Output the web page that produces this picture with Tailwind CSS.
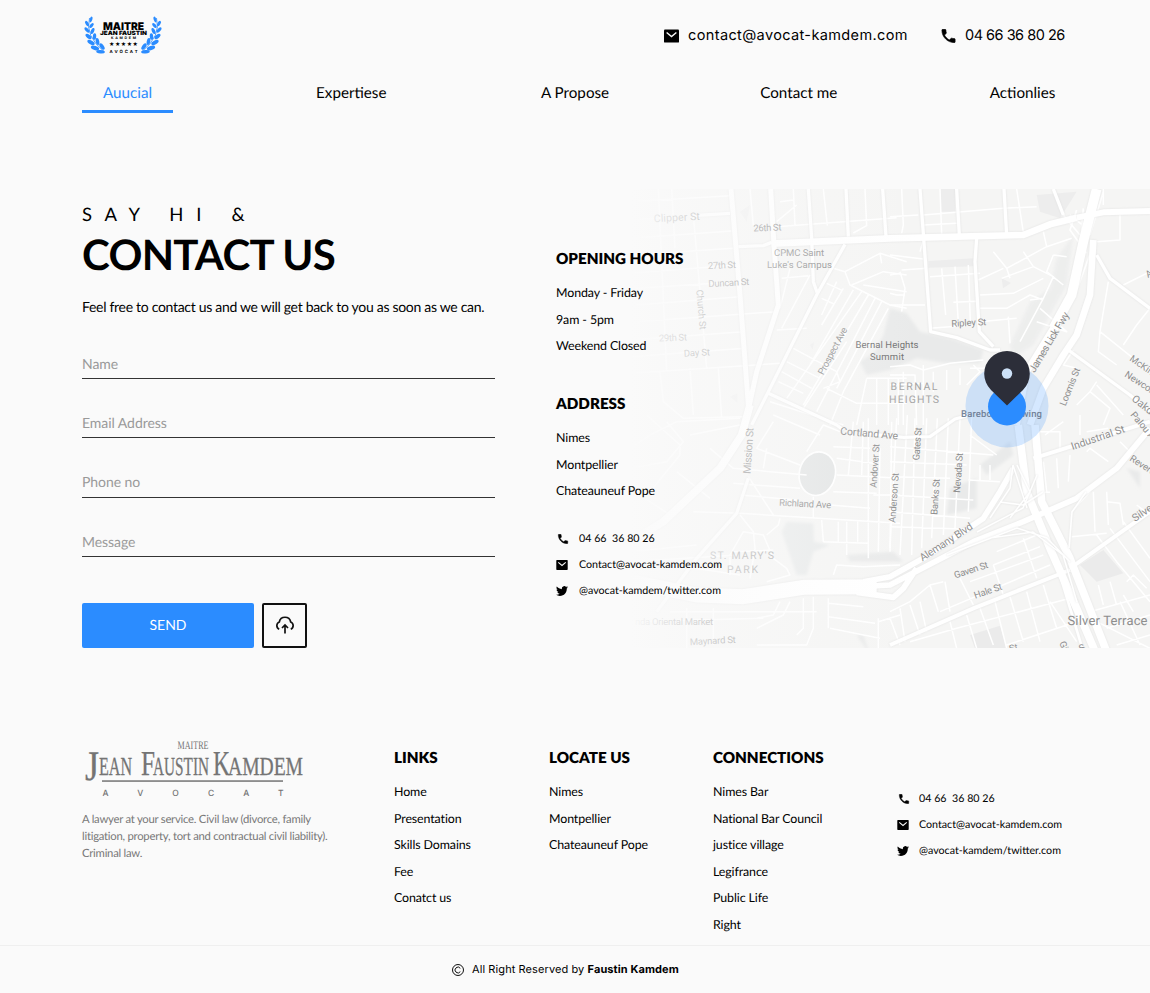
<!DOCTYPE html>
<html lang="en">
<head>
<meta charset="utf-8">
<title>Contact – Maitre Jean Faustin Kamdem</title>
<script src="https://cdn.jsdelivr.net/npm/@tailwindcss/browser@4"></script>
</head>
<body class="bg-[#fafafa] font-['Lato',sans-serif] text-black [text-rendering:geometricPrecision]">
<svg class="hidden">
  <symbol id="mail" viewBox="0 0 16 14"><rect width="16" height="14" rx="1"/><path d="M2.800 3.200 8 7.600l5.200-4.400" fill="none" stroke="#fafafa" stroke-width="1.500"/></symbol>
  <symbol id="phone" viewBox="2.500 2.500 19 19"><path d="M6.620 10.790c1.440 2.830 3.760 5.140 6.590 6.590l2.200-2.200c.27-.27.67-.36 1.020-.24 1.120.37 2.330.57 3.570.57.55 0 1 .45 1 1V20c0 .55-.45 1-1 1-9.390 0-17-7.610-17-17 0-.55.45-1 1-1h3.500c.55 0 1 .45 1 1 0 1.250.2 2.450.57 3.570.11.35.03.74-.25 1.020l-2.200 2.200z" stroke="#000" stroke-width=".8"/></symbol>
  <symbol id="bird" viewBox="0 2 24 20"><path d="M23.950 4.570a10 10 0 0 1-2.820.77 4.960 4.960 0 0 0 2.160-2.720c-.95.55-2 .95-3.130 1.180a4.920 4.920 0 0 0-8.380 4.480C7.690 8.090 4.070 6.130 1.640 3.160a4.820 4.820 0 0 0-.67 2.480c0 1.710.87 3.210 2.190 4.100a4.900 4.900 0 0 1-2.230-.62v.06a4.920 4.920 0 0 0 3.950 4.830 5 5 0 0 1-2.210.08 4.940 4.940 0 0 0 4.600 3.420A9.870 9.870 0 0 1 0 19.540a13.990 13.990 0 0 0 7.550 2.210c9.050 0 14-7.500 14-13.980 0-.21 0-.42-.02-.63a9.940 9.940 0 0 0 2.460-2.550z"/></symbol>
</svg>

<header class="h-[189px] pl-[82px] pr-[82px] flex flex-col">
  <div class="flex h-[71px] items-center justify-between pr-[3px]">
    <svg class="h-[44px] w-[84px]" viewBox="81 13 84 44">
      <g id="laurel" fill="#2b8cff">
        <path d="M88.500 17q-5 18 15 34" fill="none" stroke="#2b8cff" stroke-width=".8"/>
        <ellipse cx="90" cy="18.500" rx="1.300" ry="3" transform="rotate(20 90 18.500)"/>
        <ellipse cx="86" cy="22.500" rx="1.500" ry="3" transform="rotate(-30 86 22.500)"/>
        <ellipse cx="90.500" cy="24.500" rx="1.500" ry="3" transform="rotate(40 90.500 24.500)"/>
        <ellipse cx="86" cy="29" rx="1.600" ry="3.300" transform="rotate(-40 86 29)"/>
        <ellipse cx="91.500" cy="30" rx="1.600" ry="3.200" transform="rotate(25 91.500 30)"/>
        <ellipse cx="87.500" cy="35.500" rx="1.800" ry="3.600" transform="rotate(-50 87.500 35.500)"/>
        <ellipse cx="93.500" cy="35.500" rx="1.700" ry="3.300" transform="rotate(5 93.500 35.500)"/>
        <ellipse cx="90" cy="41.500" rx="1.900" ry="4" transform="rotate(-62 90 41.500)"/>
        <ellipse cx="96.500" cy="40.500" rx="1.800" ry="3.500" transform="rotate(-10 96.500 40.500)"/>
        <ellipse cx="94" cy="47" rx="2" ry="4.300" transform="rotate(-72 94 47)"/>
        <ellipse cx="101" cy="45.500" rx="1.900" ry="3.700" transform="rotate(-35 101 45.500)"/>
        <ellipse cx="99.500" cy="50.800" rx="1.700" ry="4.300" transform="rotate(-85 99.500 50.800)"/>
      </g>
      <use href="#laurel" transform="translate(244 0) scale(-1 1)"/>
      <g font-family="Inter, sans-serif" font-weight="900">
        <text x="102" y="28.800" font-size="10.500" textLength="41" lengthAdjust="spacingAndGlyphs">MAITRE</text>
        <text x="99" y="34" font-size="5.800" textLength="47" lengthAdjust="spacingAndGlyphs">JEAN FAUSTIN</text>
        <text x="110" y="38.300" font-size="3.500" font-weight="700" textLength="25">KAMDEM</text>
        <text x="108" y="45.200" font-size="6" textLength="29" font-family="DejaVu Sans">★★★★★</text>
        <text x="108.500" y="52.300" font-size="4.300" font-weight="700" textLength="28">AVOCAT</text>
      </g>
    </svg>
    <div class="flex items-center font-['Inter',sans-serif] text-[14.5px]">
      <svg class="mr-[9px] h-[14px] w-[15px]"><use href="#mail"/></svg>
      <span class="w-[220px] whitespace-nowrap tracking-[0.38px]">contact@avocat-kamdem.com</span>
      <svg class="ml-[33px] mr-[9px] h-[14px] w-[15px]"><use href="#phone"/></svg>
      <span class="w-[100px] whitespace-nowrap tracking-[-0.5px]">04 66 36 80 26</span>
    </div>
  </div>
  <nav class="flex justify-between text-center text-[15.2px] leading-[20px]">
    <a class="h-[42px] w-[91px] border-b-3 border-[#2b8cff] pt-[12px] text-[#2b8cff]">Auucial</a>
    <a class="w-[91px] pt-[12px]">Expertiese</a>
    <a class="w-[91px] pt-[12px]">A Propose</a>
    <a class="w-[91px] pt-[12px]">Contact me</a>
    <a class="w-[91px] pt-[12px]">Actionlies</a>
  </nav>
</header>

<main class="relative flex h-[459px] pl-[82px]">
  <svg class="absolute right-0 top-0 h-[459px] w-[520px]" viewBox="630 189 520 459" fill="none" stroke-linejoin="round">
    <defs>
      <linearGradient id="fade"><stop offset="0" stop-color="#fafafa"/><stop offset=".12" stop-color="#fafafa" stop-opacity=".78"/><stop offset=".35" stop-color="#fafafa" stop-opacity=".52"/><stop offset=".65" stop-color="#fafafa" stop-opacity=".22"/><stop offset="1" stop-color="#fafafa" stop-opacity="0"/></linearGradient>
      <filter id="soft"><feGaussianBlur stdDeviation="5"/></filter>
      <filter id="edge" filterUnits="userSpaceOnUse" x="630" y="189" width="520" height="459"><feDropShadow dx="0" dy="0" stdDeviation="1" flood-color="#dcdcdc" flood-opacity=".8"/></filter>
    </defs>
    <rect x="630" y="189" width="520" height="459" fill="#f5f5f4"/>
    <!-- parks and blocks -->
    <g fill="#e9eaea">
      <g transform="translate(630 185) scale(.33333)"><path filter="url(#soft)" d="M780 370 830 385 870 440 960 460 1060 495 1050 535 950 535 860 520 780 555 710 570 690 530 735 500 760 450z"/><path fill="#efefef" d="M330 80 360 60 350 110zM540 480l12-10-4 24zM300 635l22-10v28z"/></g>
      <g transform="translate(890 185) scale(.33333)"><path fill="#ededed" d="M150 12h45v68h-42zM115 228l137-8v24l-137 4zM440 30l120-10-50 80-60-20zM335 280l28 14-24 16z"/><path filter="url(#soft)" d="M500 220 550 150 530 300 430 480 370 520 360 480 420 350 480 310z" opacity=".6"/></g>
      <g transform="translate(630 415) scale(.33333)"><ellipse cx="562" cy="176" rx="54" ry="66" transform="rotate(14 562 176)" fill="#e3e5e5" stroke="#fff" stroke-width="5"/><path fill="#e8eaea" filter="url(#soft)" d="M470 320 550 325 552 380 600 390 550 410 530 480 500 480 455 350z"/><path filter="url(#soft)" d="M650 420 790 410 820 440 660 440zM680 660l20 0 20 60z"/></g>
      <g transform="translate(890 415) scale(.33333)"><path fill="#ebebeb" d="M570 450 640 405 700 475 620 500zM240 660 330 632 355 715 260 715z"/><path filter="url(#soft)" d="M360 80 370 120 290 180 270 150zM180 220 260 190 260 280 170 300zM710 160 750 170 750 220z"/></g>
    </g>
    <!-- minor streets -->
    <g stroke="#fff" stroke-width="4.500">
      <g transform="translate(630 185) scale(.33333)">
        <path d="M0 50 300 32M0 160 305 138M0 105 80 100M0 210 310 190M0 265 320 240M20 310 325 290M20 360 330 335M20 410 440 380M0 465 340 440M0 515 345 490M0 565 450 535M125 10 135 190M190 90 230 550M85 12 110 560M180 550l10 140M265 550l10 150M90 560l10 90 60 50 180-5M360 12l10 110M490 12l5 110M580 12l12 110M705 12l5 110-40 22M440 125 800 98M450 50l40-5M500 60l-60 50M480 250l-30 120M540 270 455 430M440 435 530 430M455 280l80-8M590 295l48 22M575 340 612 357M620 290l-45 100M640 310l-65 110M670 315 540 540M695 320 470 640M715 330 520 660M735 340 560 680M755 350 620 610M775 370 640 620 600 720M490 490 620 560 630 590 580 610M470 530 570 580M455 560 545 610M445 590 520 625M590 610 680 655H830M650 470l-130 200M610 250 645 260 660 300 780 360 830 370M645 260 750 205 830 230M665 300 760 260 830 270M700 300 830 320M750 205l5 30M420 650 640 720M710 580 680 720M710 580H830M740 580v140M775 580v140M805 580v140"/>
      </g>
      <g transform="translate(890 185) scale(.33333)">
        <path d="M0 95 85 90M100 90 340 70 440 65M100 120 200 115M35 12 40 120 35 145M150 12l5 135M380 12l20 130M0 210 100 222M100 165 90 200M35 255 110 250M30 260 45 310 35 380M0 325 20 330 45 330M0 360 105 360M0 270 30 265M155 250l12 140M195 245l10 170M235 240l6 170M120 275l150-10M190 352l70-3M310 200l40 50 10 30M350 250 470 185 545 160M470 185 460 140M340 250 265 285M335 280 430 245 490 275 460 340M430 245 400 200M270 330 370 325 460 280M270 370 350 370 420 330 460 345M490 210 530 215M490 210 470 260 520 300M355 395l5 80M270 410 380 400M120 430l130-10M420 345 460 340 390 470M450 370 530 440 440 410M640 12 640 60M690 90v75l-70 5M780 370 740 420 700 480M780 260 700 300M655 290 630 440 625 500 680 540M630 440 780 560M550 495 520 540 560 550M620 590 600 620 660 670 640 720M600 620 560 660M620 600 700 690M0 545 60 540 100 555 180 535 280 525M0 570H60 75l5 150M40 560v160M100 540v180M130 560v60M170 555v60M210 550v50M0 600l100-5M230 600l40-40-20-20M240 550h60"/>
        <path d="M520 90 570 150M540 90 590 130M560 75l-20 60 50 70M580 70 575 140M620 12 590 120M640 20 600 150M610 180 555 330" stroke-width="5"/>
      </g>
      <g transform="translate(630 415) scale(.33333)">
        <path d="M0 100 60 60 140 20 330 10M0 160 110 140 160 80 110 20M50 0 150 90 150 120 60 230M0 220 120 300M140 170 240 250M180 60 330 30M240 100 310 160 530 180M310 205 510 220M330 240 500 255M190 290 330 295 810 325M355 185 430 300M430 20 380 100 510 150M430 0 570 60M410 100 400 160M530 110 580 30 630 50M610 95l110 5M620 130l110 15M620 180l110 5M610 230l130 5M600 270l120 10M550 245v65M575 315 580 380M580 380 715 385M625 320v60M650 320 650 420M683 320v60M670 20 655 180M715 10V430M750 100 745 410M785 20 780 410M700 20 695 180M730 185 810 190M730 240h80M300 480 300 420 340 350 400 360 430 430 470 460 480 480 410 500M330 300 370 350 375 400 360 490M450 310 445 330 410 360M310 410 430 405M170 580V700M250 580V690M120 590 560 590M550 545V640L530 690 380 690M520 550V640L500 660M480 560 460 600 380 640M450 560 430 600 380 610M595 550V640M595 565 700 575M595 605l140 20M745 610v90M745 620 810 600M780 610 810 690M600 640l150 30M0 620 400 610M0 440 320 420M130 450 330 480M610 480 620 450 700 455 810 450M0 410 200 390"/>
      </g>
      <g transform="translate(890 415) scale(.33333)">
        <path d="M20 10 0 400M52 0 30 420M75 10 65 420M110 10 95 400M142 10 125 370M175 10 160 360M210 10 195 340M245 0 235 290M0 95 310 120M0 140 230 150M0 185 180 190M235 195 330 200M0 240 250 255M0 290 240 310M0 335 220 342M270 150v45M300 150v45M320 120 240 60M450 50h60v60M465 60 520 20M570 60V0M590 50 655 40M460 140 470 230M500 130 505 220M540 120 535 200M590 110 600 100 655 140M690 80l40 40M480 232h-30M580 230 600 230 545 290 538 400M610 230 615 350M650 230 655 330M650 260 690 265 700 330M545 365 650 355M740 270 780 300M620 360 680 440 780 560M660 340 780 500M700 320 780 430M625 510 640 570M660 500 680 570M700 540 730 590M710 500 730 480 770 520M600 590 780 540M650 640 780 600M680 690 780 660M690 560 750 690M620 620 780 700M0 590 60 560 120 510 160 500M120 510 145 590M165 500 180 590M210 490 250 570M310 450 340 540M400 370 440 490M320 410 440 360M310 450 450 395M240 500 460 420M150 590 480 450M60 570 90 660M30 580 45 680M90 560 110 650M180 620 200 700M230 600 260 700M270 580 310 690M315 560 350 700M360 545 400 680M410 530 450 680M460 510 500 640M60 680 200 640 540 550M350 690 560 620M480 560 560 680"/>
      </g>
    </g>
    <!-- main roads, with a faint edge -->
    <g stroke="#fff" filter="url(#edge)"><g transform="translate(630 185) scale(.33333)">
        <path stroke-width="15" d="M303 12 330 330 355 660M422 12 432 180 445 360 380 560 345 720"/>
        <path stroke-width="10" d="M325 185 400 182 425 172M190 92 300 85M535 12 545 160 550 290 562 325M648 12 655 155M645 178 560 330 490 470 415 620 365 720M415 625 620 720 640 735M758 12 768 155"/>
        <path stroke-width="20" d="M425 176 780 160 1180 150 1260 118 1340 98"/>
        <path stroke-width="10" d="M870 12 902 440 980 458 1080 495 1110 495M980 12 988 150M1122 12 1130 150M1040 160 1035 230 1048 440 1090 485M1270 12 1300 90M1400 210 1440 280 1560 370M1315 495 1500 630 1560 680"/>
        <path stroke-width="18" d="M1340 98 1420 82 1560 78"/>
        <path stroke-width="29" d="M1400 12 1360 170 1325 330 1270 430"/>
        <path stroke-width="20" d="M1390 165 1380 330 1340 450 1300 510 1240 610 1200 720M1270 430 1190 560 1160 720"/>
        <path stroke-width="23" d="M360 660 335 750 270 850 100 1010 0 1070"/>
        <path stroke-width="10" d="M355 880 320 985 200 1120 80 1280M700 745 820 757 900 755 975 702 1020 690"/>
        <path stroke-width="45" d="M0 1190 200 1230 340 1235 520 1207 740 1205"/>
        <path stroke-width="17" d="M700 1190 780 1175 880 1120 1060 1000 1110 920 1150 850M640 1208 780 1200 1030 1070 1180 1010 1340 940 1460 850 1560 730M680 1222 790 1237 820 1210 860 1150"/>
        <path stroke-width="23" d="M1165 720 1190 920 1260 1090 1340 1270 1400 1410M1215 720 1235 950 1320 1120 1430 1400"/>
        <path stroke-width="12" d="M1210 820 1560 710M1320 1150 1560 980M780 1380 1030 1270 1320 1155"/>
        <path stroke-width="8" d="M1290 1170 1360 1400"/>
    </g></g>
    <g filter="url(#edge)" stroke="#fff" stroke-width="1.500">
      <path d="M1013 465 1010 488 990 518M1017 465 1030 492 1010 518M1000 502 1023 505 1043 492M1013 465 1027 508M977 532 1023 508 1037 475M947 555 1017 528 1047 538 1070 562M990 538 1033 532 1063 555 1077 602M1086 492 1072 512 1069 548"/>
    </g>
    <!-- street and district names -->
    <g fill="#8e8e8e" font-family="Roboto, sans-serif" font-size="9.500" text-anchor="middle">
      <text transform="translate(677 221) rotate(-3)" font-size="10.500" textLength="46">Clipper St</text>
      <text transform="translate(767.500 231) rotate(-2)" textLength="28">26th St</text>
      <text x="799" y="256" textLength="50">CPMC Saint</text><text x="799.500" y="267.500" textLength="65">Luke's Campus</text>
      <text transform="translate(722 268.500) rotate(-2)" textLength="28">27th St</text>
      <text transform="translate(729 286) rotate(-3)" textLength="41">Duncan St</text>
      <text transform="translate(698 310) rotate(85)" textLength="40">Church St</text>
      <text transform="translate(673 341) rotate(-2)" textLength="28">29th St</text>
      <text transform="translate(697 356) rotate(-3)" textLength="26">Day St</text>
      <text transform="translate(835.500 352.500) rotate(-62)" textLength="52">Prospect Ave</text>
      <g fill="#707070"><text x="887" y="348" textLength="63">Bernal Heights</text><text x="887" y="360" textLength="34">Summit</text></g>
      <g font-size="10.500" fill="#a4a4a4"><text x="914" y="390" textLength="47">BERNAL</text><text x="914" y="403" textLength="50">HEIGHTS</text><text x="742" y="559" textLength="64">ST. MARY'S</text><text x="742.500" y="572.500" textLength="31">PARK</text></g>
      <text transform="translate(969 326) rotate(-3)" textLength="35">Ripley St</text>
      <text transform="translate(1052 344) rotate(-59)" font-size="10.500" textLength="68">James Lick Fwy</text>
      <text transform="translate(1073 388) rotate(-68)" textLength="40">Loomis St</text>
      <text transform="translate(869 437) rotate(5)" font-size="10.500" textLength="58">Cortland Ave</text>
      <text transform="translate(752 451) rotate(-86)" font-size="10.500" textLength="46">Mission St</text>
      <text transform="translate(805 507) rotate(3)" textLength="52">Richland Ave</text>
      <text transform="translate(878 466) rotate(-86)" textLength="44">Andover St</text>
      <text transform="translate(897 498) rotate(-86)" textLength="50">Anderson St</text>
      <text transform="translate(920.500 444) rotate(-86)" textLength="33">Gates St</text>
      <text transform="translate(938.500 497) rotate(-86)" textLength="36">Banks St</text>
      <text transform="translate(961.500 473) rotate(-86)" textLength="40">Nevada St</text>
      <text transform="translate(948 545) rotate(-33)" font-size="10.500" textLength="61">Alemany Blvd</text>
      <text transform="translate(1099 441) rotate(-19)" font-size="10.500" textLength="56">Industrial St</text>
      <text transform="translate(972 573) rotate(-18)" textLength="35">Gaven St</text>
      <text transform="translate(989 594) rotate(-19)" textLength="29">Hale St</text>
      <text x="1107.500" y="625" font-size="13" textLength="80">Silver Terrace</text>
      <text transform="translate(713 644) rotate(-3)" textLength="46">Maynard St</text>
      <text x="674" y="624.500" textLength="78">nda Oriental Market</text>
      <g text-anchor="start">
        <text transform="translate(1129 360) rotate(35)">McKinnon Ave</text><text transform="translate(1124 376) rotate(33)">Newcomb Ave</text>
        <text transform="translate(1131 400) rotate(38)" font-size="10.500">Oakdale Ave</text><text transform="translate(1130 415) rotate(50)">Palou Ave</text>
        <text transform="translate(1129 460) rotate(33)">Revere Ave</text><text transform="translate(1135 522) rotate(-34)" font-size="10.500">Silver Ave</text>
        <text transform="translate(1148 278) rotate(-32)">Ave</text><text transform="translate(1010 652) rotate(-14)">St</text><text transform="translate(1059 643) rotate(65)">Gi</text><text transform="translate(1081 652) rotate(-28)">S</text>
      </g>
    </g>
    <rect x="630" y="189" width="290" height="459" fill="url(#fade)"/>
    <!-- location pin -->
    <circle cx="1007" cy="406" r="41.500" fill="#2b8cff" opacity=".2"/>
    <text x="1001.500" y="416.500" fill="#73839a" font-family="Roboto" font-weight="500" font-size="9.500" text-anchor="middle" textLength="81">Barebones Sewing</text>
    <circle cx="1007" cy="406.500" r="19" fill="#2b8cff"/>
    <path d="M1007 405.500 991 390A22.800 22.800 0 1 1 1023 390z" fill="#2c2e39"/>
    <circle cx="1007" cy="373.500" r="5.200" fill="#cde1f8"/>
  </svg>

  <section class="w-[474px] pt-[12px]">
    <p class="h-[26px] text-[18.500px] leading-[26px] tracking-[12.700px] whitespace-nowrap">SAY HI &amp;</p>
    <h1 class="mt-[1px] h-[52px] text-[42px] font-bold leading-[52px] tracking-[-0.700px] whitespace-nowrap">CONTACT US</h1>
    <p class="mt-[17px] h-[20px] text-[14px] leading-[20px] tracking-[-0.300px] whitespace-nowrap">Feel free to contact us and we will get back to you as soon as we can.</p>
    <form class="mt-[33px] w-[413px] text-[14px] leading-[20px] tracking-[-0.050px] text-[#999]">
      <div class="h-[29px] border-b border-[#333] pt-[3.500px]">Name</div>
      <div class="mt-[30.400px] h-[29px] border-b border-[#333] pt-[3.500px]">Email Address</div>
      <div class="mt-[30.400px] h-[29px] border-b border-[#333] pt-[3.500px]">Phone no</div>
      <div class="mt-[30.400px] h-[29px] border-b border-[#333] pt-[3.500px]">Message</div>
      <div class="mt-[45.400px] flex gap-[8px]">
        <div class="flex h-[45.500px] w-[172px] items-center justify-center rounded-[2px] bg-[#2b8cff] text-[14px] text-white">SEND</div>
        <div class="flex h-[45.500px] w-[45px] items-center justify-center rounded-[2px] border-2 border-[#111]">
          <svg class="h-[20px] w-[20px]" viewBox="0 0 20 20" fill="none" stroke="#111" stroke-width="1.700"><path d="M4.200 14.200A3.900 3.900 0 0 1 4.300 7 5.800 5.800 0 0 1 15.700 7 3.900 3.900 0 0 1 15.800 14.200M10 18.500V10.500M7 13l3-3 3 3"/></svg>
        </div>
      </div>
    </form>
  </section>

  <section class="relative w-[200px] pt-[60px] text-[12.400px] leading-[26.600px] tracking-[-0.100px] whitespace-nowrap">
    <h2 class="h-[21px] text-[15.200px] font-extrabold leading-[21px] tracking-normal">OPENING HOURS</h2>
    <div class="mt-[10px]"><p>Monday - Friday</p><p>9am - 5pm</p><p>Weekend Closed</p></div>
    <h2 class="mt-[34.500px] h-[21px] text-[15.200px] font-extrabold leading-[21px] tracking-normal">ADDRESS</h2>
    <div class="mt-[10px]"><p>Nimes</p><p>Montpellier</p><p>Chateauneuf Pope</p></div>
    <div class="mt-[20.700px] text-[10.700px] leading-[26px] tracking-normal">
      <p class="flex items-center gap-[11px]"><svg class="ml-[1px] mr-[-1px] h-[10px] w-[12px]"><use href="#phone"/></svg>04 66&nbsp; 36 80 26</p>
      <p class="flex items-center gap-[11px]"><svg class="h-[10px] w-[12px]"><use href="#mail"/></svg>Contact@avocat-kamdem.com</p>
      <p class="flex items-center gap-[11px]"><svg class="h-[10px] w-[12px]"><use href="#bird"/></svg>@avocat-kamdem/twitter.com</p>
    </div>
  </section>
</main>

<footer class="pt-[90px]">
  <div class="flex h-[207px] pl-[82px] text-[12.400px] leading-[26.600px] tracking-[-0.100px] whitespace-nowrap">
    <div class="w-[312px]">
      <svg class="h-[64px] w-[226px]" viewBox="82 738 226 64" fill="#747474" font-family="Liberation Serif, serif" letter-spacing="0">
        <text x="177.500" y="748.500" font-size="11.500" textLength="31" lengthAdjust="spacingAndGlyphs">MAITRE</text>
        <g stroke="#747474" stroke-width=".3">
        <text x="85" y="780" font-size="42" textLength="14" lengthAdjust="spacingAndGlyphs">J</text>
        <text x="99" y="775" font-size="26" textLength="33" lengthAdjust="spacingAndGlyphs">EAN</text>
        <text x="141" y="775" font-size="35" textLength="14" lengthAdjust="spacingAndGlyphs">F</text>
        <text x="153" y="775" font-size="26" textLength="56" lengthAdjust="spacingAndGlyphs">AUSTIN</text>
        <text x="213" y="775" font-size="35" textLength="17" lengthAdjust="spacingAndGlyphs">K</text>
        <text x="228" y="775" font-size="26" textLength="75" lengthAdjust="spacingAndGlyphs">AMDEM</text>
        </g>
        <rect x="102" y="780.300" width="181" height="1.500"/>
        <text x="102.500" y="795.700" font-size="8.500" font-family="Inter, sans-serif" font-weight="500" textLength="181">AVOCAT</text>
      </svg>
      <p class="mt-[10px] text-[11.300px] leading-[16.800px] tracking-[-0.250px] text-[#777]">A lawyer at your service. Civil law (divorce, family<br>litigation, property, tort and contractual civil liability).<br>Criminal law.</p>
    </div>
    <div class="w-[155px] pt-[10px]">
      <h2 class="mb-[10px] text-[15.200px] font-extrabold leading-[21px] tracking-normal">LINKS</h2>
      <p>Home</p><p>Presentation</p><p>Skills Domains</p><p>Fee</p><p>Conatct us</p>
    </div>
    <div class="w-[164px] pt-[10px]">
      <h2 class="mb-[10px] text-[15.200px] font-extrabold leading-[21px] tracking-normal">LOCATE US</h2>
      <p>Nimes</p><p>Montpellier</p><p>Chateauneuf Pope</p>
    </div>
    <div class="w-[184px] pt-[10px]">
      <h2 class="mb-[10px] text-[15.200px] font-extrabold leading-[21px] tracking-normal">CONNECTIONS</h2>
      <p>Nimes Bar</p><p>National Bar Council</p><p>justice village</p><p>Legifrance</p><p>Public Life</p><p>Right</p>
    </div>
    <div class="pt-[47.500px] text-[10.700px] leading-[26px] tracking-normal">
      <p class="flex items-center gap-[10px]"><svg class="ml-[1px] mr-[-1px] h-[10px] w-[12px]"><use href="#phone"/></svg>04 66&nbsp; 36 80 26</p>
      <p class="flex items-center gap-[10px]"><svg class="h-[10px] w-[12px]"><use href="#mail"/></svg>Contact@avocat-kamdem.com</p>
      <p class="flex items-center gap-[10px]"><svg class="h-[10px] w-[12px]"><use href="#bird"/></svg>@avocat-kamdem/twitter.com</p>
    </div>
  </div>
  <div class="flex h-[48px] items-center border-t border-[#efefef] pl-[452px] font-['Inter',sans-serif] text-[11px] tracking-[0.090px] whitespace-nowrap">
    <svg class="mr-[8px] h-[12px] w-[12px]" viewBox="0 0 12 12" fill="none" stroke="#111"><circle cx="6" cy="6" r="5.500"/><path d="M8.300 4.300a2.900 2.900 0 1 0 0 3.400"/></svg>
    <span>All Right Reserved by <b>Faustin Kamdem</b></span>
  </div>
</footer>
</body>
</html>
